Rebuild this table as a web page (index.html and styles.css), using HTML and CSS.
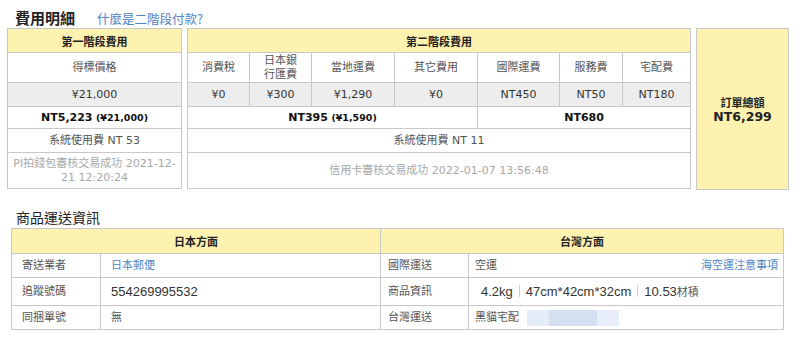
FILE: index.html
```html
<!DOCTYPE html>
<html lang="zh-Hant">
<head>
<meta charset="utf-8">
<link rel="stylesheet" href="styles.css">
</head>
<body>
<div class="page">
  <div class="sec-title">
    <h2 class="title-main">費用明細</h2>
    <a class="link title-link" href="#">什麼是二階段付款?</a>
  </div>
  <div class="fees">
    <table class="tbl stage1">
      <tr class="r-head"><th>第一階段費用</th></tr>
      <tr class="r-sub"><td>得標價格</td></tr>
      <tr class="r-val"><td>¥21,000</td></tr>
      <tr class="r-sum"><td><b>NT5,223</b> <b class="small">(¥21,000)</b></td></tr>
      <tr class="r-sys"><td>系統使用費 NT 53</td></tr>
      <tr class="r-note"><td class="muted tight">PI拍錢包審核交易成功 2021-12-21 12:20:24</td></tr>
    </table>
    <table class="tbl stage2">
      <colgroup>
        <col class="c62"><col class="c62"><col class="c83"><col class="c83"><col class="c82"><col class="c63"><col class="c68">
      </colgroup>
      <tr class="r-head"><th colspan="7">第二階段費用</th></tr>
      <tr class="r-sub"><td>消費稅</td><td class="two">日本銀<br>行匯費</td><td>當地運費</td><td>其它費用</td><td>國際運費</td><td>服務費</td><td>宅配費</td></tr>
      <tr class="r-val"><td>¥0</td><td>¥300</td><td>¥1,290</td><td>¥0</td><td>NT450</td><td>NT50</td><td>NT180</td></tr>
      <tr class="r-sum"><td colspan="4"><b>NT395</b> <b class="small">(¥1,590)</b></td><td colspan="3"><b>NT680</b></td></tr>
      <tr class="r-sys"><td colspan="7">系統使用費 NT 11</td></tr>
      <tr class="r-note"><td colspan="7" class="muted">信用卡審核交易成功 2022-01-07 13:56:48</td></tr>
    </table>
    <div class="total">
      <div class="total-label">訂單總額</div>
      <div class="total-value">NT6,299</div>
    </div>
  </div>

  <h2 class="ship-title">商品運送資訊</h2>
  <table class="tbl ship">
    <colgroup><col class="s1"><col class="s2"><col class="s3"><col class="s4"></colgroup>
    <tr class="r-head"><th colspan="2">日本方面</th><th colspan="2">台灣方面</th></tr>
    <tr class="sr1"><td class="lbl">寄送業者</td><td class="val"><a class="link" href="#">日本郵便</a></td><td class="lbl2">國際運送</td><td class="val2"><div class="split"><span>空運</span><a class="link" href="#">海空運注意事項</a></div></td></tr>
    <tr class="sr2"><td class="lbl">追蹤號碼</td><td class="val big">554269995532</td><td class="lbl2">商品資訊</td><td class="val2 big indent">4.2kg<span class="sep"></span>47cm*42cm*32cm<span class="sep"></span>10.53<span class="cjk">材積</span></td></tr>
    <tr class="sr3"><td class="lbl">同捆單號</td><td class="val">無</td><td class="lbl2">台灣運送</td><td class="val2"><div class="tw"><span>黑貓宅配</span><span class="blur"><i class="b1"></i><i class="b2"></i><i class="b3"></i></span></div></td></tr>
  </table>
</div>
</body>
</html>
```
FILE: styles.css
```css
* { box-sizing: border-box; }
body {
  margin: 0;
  background: #fff;
  font-family: "DejaVu Sans", "Noto Sans CJK TC", sans-serif;
  font-size: 11px;
  color: #333;
}
.page { padding: 7px 0 0 0; }
.sec-title {
  display: flex;
  align-items: baseline;
  gap: 22px;
  padding-left: 15px;
  height: 21px;
}
.title-main {
  margin: 0;
  font-size: 15px;
  font-weight: bold;
  color: #222;
  font-family: "Noto Sans CJK TC", sans-serif;
}
.link { color: #4f84c4; text-decoration: none; }
.title-link { font-size: 12.5px; font-family: "Noto Sans CJK TC", sans-serif; }

.fees {
  display: flex;
  align-items: flex-start;
  gap: 5px;
  padding-left: 7px;
}
.tbl {
  border-collapse: collapse;
  table-layout: fixed;
}
.tbl th, .tbl td {
  border: 1px solid #c8c8c8;
  text-align: center;
  padding: 0 2px;
  font-weight: normal;
  line-height: 14px;
}
.tbl th {
  background: #fef2b1;
  font-weight: bold;
  font-size: 11px;
  color: #222;
  font-family: "Noto Sans CJK TC", sans-serif;
}
.stage1 { width: 175px; }
.stage2 { width: 503px; }
.c62 { width: 62px; }
.c83 { width: 83px; }
.c82 { width: 82px; }
.c63 { width: 63px; }
.c68 { width: 68px; }

.r-head { height: 24px; }
.r-sub { height: 30px; }
.r-sub td { color: #555; }
.r-val { height: 24px; }
.r-val td { background: #ededed; color: #333; }
.r-sum { height: 22px; }
.r-sum td { color: #111; font-size: 11px; }
.r-sum .small { font-size: 9.5px; }
.r-sys { height: 24px; }
.r-sys td { color: #555; }
.r-note { height: 36px; }
.muted { color: #a8a8a8; }
.tbl td.tight { padding: 0; }
.two { line-height: 15px; }

.total {
  width: 93px;
  height: 162px;
  background: #fef2b1;
  border: 1px solid #c8c8c8;
  display: flex;
  flex-direction: column;
  align-items: center;
  justify-content: center;
  color: #222;
  padding-top: 2px;
}
.total-label { font-size: 11px; font-weight: bold; font-family: "Noto Sans CJK TC", sans-serif; line-height: 13px; }
.total-value { font-size: 12.5px; font-weight: bold; line-height: 15px; }

.ship-title {
  margin: 17px 0 0 16px;
  font-size: 14px;
  font-weight: normal;
  color: #222;
  height: 20px;
  line-height: 20px;
  font-family: "Noto Sans CJK TC", sans-serif;
}
.ship {
  margin: 1px 0 0 11px;
  width: 772px;
}
.s1 { width: 89px; }
.s2 { width: 280px; }
.s3 { width: 88px; }
.s4 { width: 315px; }
.ship .r-head { height: 25px; }
.ship td { text-align: left; color: #555; }
.ship td.lbl, .ship td.val { padding: 0 10px; }
.ship td.lbl2 { padding: 0 6px 0 7px; }
.ship td.val2 { padding: 0 5px 0 6px; }
.sr1 { height: 24px; }
.sr2 { height: 28px; }
.sr3 { height: 24px; }
.ship td.big {
  font-family: "Liberation Sans", "Noto Sans CJK TC", sans-serif;
  font-size: 13px;
  color: #333;
}
.ship td.indent { padding-left: 12px; }
.big .cjk { font-size: 11px; font-family: "Noto Sans CJK TC", sans-serif; color: #555; }
.sep {
  display: inline-block;
  width: 1px;
  height: 12px;
  background: #d0d0d0;
  margin: 0 6px;
  vertical-align: -1px;
}
.split { display: flex; justify-content: space-between; }
.tw { display: flex; align-items: center; gap: 8px; }
.blur { display: flex; height: 16px; }
.blur i { display: block; height: 16px; }
.b1 { width: 22px; background: #e3ecf8; }
.b2 { width: 48px; background: #d4e0f2; }
.b3 { width: 22px; background: #e8eef9; }
```
